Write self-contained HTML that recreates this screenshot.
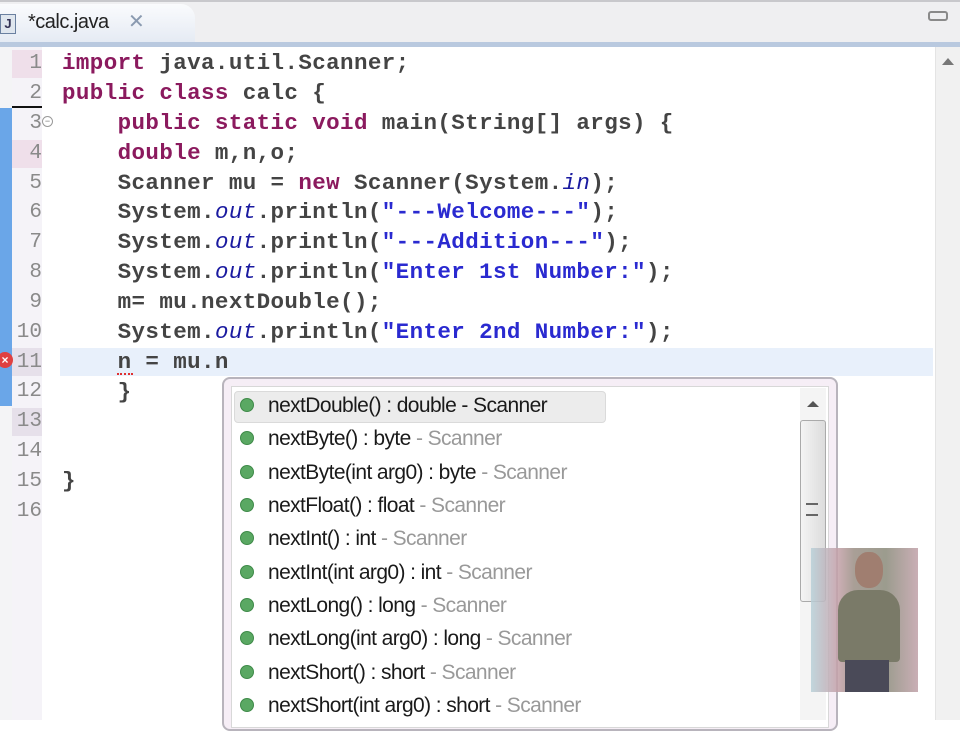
<!DOCTYPE html>
<html><head><style>
body{margin:0;width:960px;height:720px;overflow:hidden;background:#fff;position:relative;font-family:"Liberation Sans",sans-serif}
.abs{position:absolute}
.code{font-family:"Liberation Mono",monospace;font-size:22.5px;font-weight:bold;color:#444;white-space:pre;letter-spacing:0.4px}
.ln{position:absolute;left:14px;width:28px;text-align:right;font-family:"Liberation Mono",monospace;font-size:21px;color:#8a8a8a;height:30px;line-height:30px}
.k{color:#8b1a5e}.s{color:#2a2ad0}.f{color:#1a1aa0;font-style:italic;font-weight:normal}
.row{position:absolute;left:240px;font-size:21px;letter-spacing:-0.6px;color:#1a1a1a;height:30px;line-height:30px;white-space:pre}
.row i{display:inline-block;width:12px;height:12px;border-radius:50%;background:#5aa863;border:1px solid #3e8a48;margin-right:14px;vertical-align:0px;font-style:normal}
.row span{color:#999}
</style></head><body>
<!-- tab bar -->
<div class="abs" style="left:0;top:0;width:960px;height:44px;background:#efeff1;border-top:2px solid #c8c8cc"></div>
<div class="abs" style="left:0;top:4px;width:195px;height:40px;background:linear-gradient(#fafbfd,#e4eaf3);border-radius:0 14px 0 0"></div>
<div class="abs" style="left:0;top:14px;width:14px;height:18px;background:#dfe6ee;border:1px solid #6a80a0;font-size:13px;font-weight:bold;color:#335;text-align:center;line-height:18px">J</div>
<div class="abs" style="left:28px;top:11px;font-size:20px;color:#222;letter-spacing:-0.5px">*calc.java</div>
<div class="abs" style="left:128px;top:9px;font-size:20px;color:#8a9ab0">✕</div>
<div class="abs" style="left:928px;top:11px;width:16px;height:6px;border:2px solid #8a8a8a;border-radius:3px"></div>
<div class="abs" style="left:0;top:42px;width:960px;height:5px;background:#b9c9df"></div>
<!-- right scrollbar -->
<div class="abs" style="left:935px;top:47px;width:25px;height:673px;background:#f1f1f1;border-left:1px solid #e4e4e4"></div>
<div class="abs" style="left:942px;top:58px;width:0;height:0;border-left:6px solid transparent;border-right:6px solid transparent;border-bottom:7px solid #777"></div>
<!-- gutter -->
<div class="abs" style="left:0;top:47px;width:12px;height:673px;background:#f4f4f6"></div>
<div class="abs" style="left:0;top:108px;width:12px;height:298px;background:#6aa6e8"></div>
<div class="abs" style="left:12px;top:47px;width:30px;height:673px;background:#f5f3f8"></div>
<div class="abs" style="left:12px;top:50px;width:30px;height:28px;background:#efdfea"></div>
<div class="abs" style="left:12px;top:140px;width:30px;height:28px;background:#efdfea"></div>
<div class="abs" style="left:12px;top:348px;width:30px;height:28px;background:#e6e0ea"></div>
<div class="abs" style="left:12px;top:408px;width:30px;height:28px;background:#e6e0ea"></div>
<div class="abs" style="left:12px;top:106px;width:30px;height:2px;background:#111"></div>
<div class="abs" style="left:60px;top:348px;width:873px;height:28px;background:#e8f0fb"></div>
<div class="ln" style="top:49px">1</div><div class="ln" style="top:79px">2</div><div class="ln" style="top:109px">3</div>
<div class="ln" style="top:139px">4</div><div class="ln" style="top:169px">5</div><div class="ln" style="top:198px">6</div>
<div class="ln" style="top:228px">7</div><div class="ln" style="top:258px">8</div><div class="ln" style="top:288px">9</div>
<div class="ln" style="top:318px">10</div><div class="ln" style="top:348px">11</div><div class="ln" style="top:377px">12</div>
<div class="ln" style="top:407px">13</div><div class="ln" style="top:437px">14</div><div class="ln" style="top:467px">15</div><div class="ln" style="top:497px">16</div>
<div class="abs" style="left:42px;top:116px;width:9px;height:9px;border:1px solid #999;border-radius:50%;font-size:9px;line-height:9px;text-align:center;color:#777">−</div>
<div class="abs" style="left:-3px;top:352px;width:16px;height:16px;border-radius:50%;background:#e04040;color:#fff;font-size:12px;line-height:16px;text-align:center;font-weight:bold">×</div>
<!-- code -->
<div class="abs code" style="left:62px;top:49px;line-height:29.87px"><span class="k">import</span> java.util.Scanner;
<span class="k">public class</span> calc {
    <span class="k">public static void</span> main(String[] args) {
    <span class="k">double</span> m,n,o;
    Scanner mu = <span class="k">new</span> Scanner(System.<span class="f">in</span>);
    System.<span class="f">out</span>.println(<span class="s">"---Welcome---"</span>);
    System.<span class="f">out</span>.println(<span class="s">"---Addition---"</span>);
    System.<span class="f">out</span>.println(<span class="s">"Enter 1st Number:"</span>);
    m= mu.nextDouble();
    System.<span class="f">out</span>.println(<span class="s">"Enter 2nd Number:"</span>);
    n = mu.n
    }

 
}</div>
<div class="abs" style="left:117px;top:370px;width:16px;height:3px;border-bottom:2px dotted #e03030"></div>
<!-- popup -->
<div class="abs" style="left:222px;top:377px;width:612px;height:350px;border:2px solid #b8b4bc;border-radius:8px;background:#f6eef6"></div>
<div class="abs" style="left:231px;top:386px;width:596px;height:340px;background:#fff;border:1px solid #d8d8d8"></div>
<div class="abs" style="left:234px;top:391px;width:370px;height:30px;background:#ececec;border:1px solid #dadada;border-radius:4px"></div>
<div class="abs" style="left:800px;top:388px;width:26px;height:332px;background:#f4f4f4"></div>
<div class="abs" style="left:807px;top:401px;width:0;height:0;border-left:6px solid transparent;border-right:6px solid transparent;border-bottom:6px solid #555"></div>
<div class="abs" style="left:800px;top:420px;width:24px;height:180px;background:linear-gradient(90deg,#f4f4f4,#dcdcdc);border:1px solid #aaa;border-radius:3px"></div>
<div class="abs" style="left:806px;top:503px;width:12px;height:9px;border-top:2px solid #666;border-bottom:2px solid #666"></div>
<div class="row" style="top:391px"><i></i>nextDouble() : double - Scanner</div>
<div class="row" style="top:424px"><i></i>nextByte() : byte <span>- Scanner</span></div>
<div class="row" style="top:458px"><i></i>nextByte(int arg0) : byte <span>- Scanner</span></div>
<div class="row" style="top:491px"><i></i>nextFloat() : float <span>- Scanner</span></div>
<div class="row" style="top:524px"><i></i>nextInt() : int <span>- Scanner</span></div>
<div class="row" style="top:558px"><i></i>nextInt(int arg0) : int <span>- Scanner</span></div>
<div class="row" style="top:591px"><i></i>nextLong() : long <span>- Scanner</span></div>
<div class="row" style="top:624px"><i></i>nextLong(int arg0) : long <span>- Scanner</span></div>
<div class="row" style="top:658px"><i></i>nextShort() : short <span>- Scanner</span></div>
<div class="row" style="top:691px"><i></i>nextShort(int arg0) : short <span>- Scanner</span></div>
<!-- photo -->
<div class="abs" style="left:811px;top:548px;width:107px;height:144px;background:linear-gradient(90deg,#b8d0d8 0,#c4a0a8 25%,#9a8e84 40%,#8a8a7a 70%,#c0a0a8 100%);opacity:0.85"></div>
<div class="abs" style="left:855px;top:552px;width:28px;height:36px;border-radius:45%;background:#a07e70"></div>
<div class="abs" style="left:838px;top:590px;width:62px;height:72px;border-radius:20px 20px 4px 4px;background:#7a7a68"></div>
<div class="abs" style="left:845px;top:660px;width:44px;height:32px;background:#4a4a58"></div>
</body></html>
